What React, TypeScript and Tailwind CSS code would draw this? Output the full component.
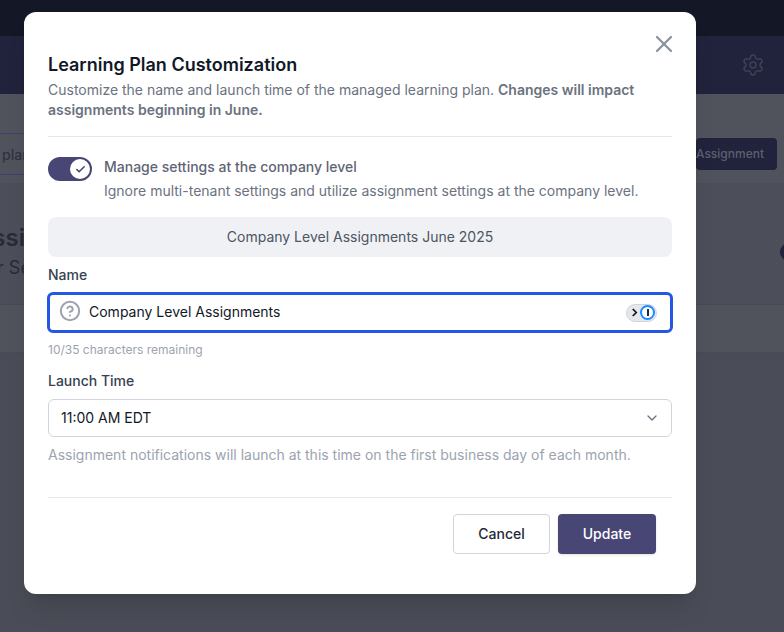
import { Check, ChevronDown, CircleHelp, Settings, X } from 'lucide-react'

const App = () => {
    return (
        <div className="relative h-[632px] w-[784px] overflow-hidden bg-[#4a4d57] font-['Inter',sans-serif]">

            {/* dimmed page behind the dialog */}
            <div className="h-9 bg-[#141826]" />
            <div className="flex h-[58px] items-center justify-end bg-[#20233b] pr-[19px]">
                <Settings className="h-6 w-6 text-[#3f4354]" strokeWidth={1.4} />
            </div>
            <div className="flex h-[89px] items-end justify-between bg-[#50535c] pb-[8px]">
                <div className="flex h-[42px] w-[24px] items-center overflow-hidden border-y border-[#3e4270] pt-[2px] text-sm font-medium text-[#2f3342]">
                    <span className="ml-[2px]">plan</span>
                </div>
                <div className="mb-[5px] mr-[7px] flex h-[32px] w-[81px] items-center justify-end rounded bg-[#20233b] pr-[13px] text-xs font-medium text-[#5d6070]">
                    Assignment
                </div>
            </div>
            <div className="flex h-[122px] justify-between overflow-hidden border-b border-[#484b54] bg-[#4c4f59] pt-[39px]">
                <div className="text-[#282b38]">
                    <div className="ml-[-25px] text-2xl font-semibold leading-8">Assig</div>
                    <div className="ml-[-3px] text-lg leading-7">r Se</div>
                </div>
                <div className="mr-[-14px] mt-[21px] h-[18px] w-[18px] rounded-full bg-[#20233b]" />
            </div>
            <div className="h-[48px] border-b border-[#484b54] bg-[#50535c]" />

            {/* dialog */}
            <div className="absolute left-[24px] top-[12px] h-[582px] w-[672px] rounded-xl bg-white px-6 pt-[42px] shadow-xl">
                <button className="absolute right-[18px] top-[18px] text-[#8a919e]">
                    <X className="h-7 w-7" strokeWidth={1.9} />
                </button>

                <h2 className="text-lg font-semibold leading-[22px] text-[#111827]">Learning Plan Customization</h2>
                <p className="mt-[4px] text-sm leading-5 text-[#6b7280]">
                    Customize the name and launch time of the managed learning plan.{' '}
                    <span className="font-semibold">Changes will impact assignments beginning in June.</span>
                </p>

                <div className="mt-[16px] border-t border-[#e5e7eb]" />

                <div className="mt-[18px] flex gap-3">
                    <div className="mt-[2px] flex h-6 w-11 items-center justify-end rounded-full bg-[#484675] pr-[2px]">
                        <div className="flex h-5 w-5 items-center justify-center rounded-full bg-white">
                            <Check className="h-[11px] w-[11px] text-[#484675]" strokeWidth={3.5} />
                        </div>
                    </div>
                    <div className="text-sm leading-6 text-[#6b7280]">
                        <div className="font-medium text-[#5f6475]">Manage settings at the company level</div>
                        <div>Ignore multi-tenant settings and utilize assignment settings at the company level.</div>
                    </div>
                </div>

                <div className="mt-[14px] flex h-10 items-center justify-center rounded-lg bg-[#f0f1f5] text-sm text-[#4b5563]">
                    Company Level Assignments June 2025
                </div>

                <label className="mt-[8px] block text-sm font-medium leading-5 text-[#374151]">Name</label>

                <div className="-mx-px mt-[7px] flex h-[41px] items-center rounded-md border-[3px] border-[#2457e6] pl-[9px] pr-[13px]">
                    <CircleHelp className="-mt-[3px] h-[22px] w-[22px] text-[#9ca3af]" strokeWidth={2.2} />
                    <span className="-mt-px ml-[8px] flex-1 text-sm text-[#111827]">Company Level Assignments</span>
                    <div className="flex h-[18px] w-[31px] items-center justify-between rounded-full border border-[#d1d5db] bg-[#e5e7eb] pl-[4px] pr-px">
                        <svg viewBox="0 0 8 10" className="h-[9px] w-[7px]" fill="none" stroke="#111827" strokeWidth="2">
                            <path d="M2 1l4 4-4 4" />
                        </svg>
                        <div className="flex h-[15px] w-[15px] items-center justify-center rounded-full border-[2.5px] border-[#1a8cff] bg-white">
                            <div className="h-[7px] w-[2px] bg-[#1f2937]" />
                        </div>
                    </div>
                </div>

                <p className="mt-[9px] text-xs leading-4 text-[#9ca3af]">10/35 characters remaining</p>

                <label className="mt-[13px] block text-sm font-medium leading-5 text-[#374151]">Launch Time</label>

                <div className="mt-[8px] flex h-[38px] items-center justify-between rounded-md border border-[#d1d5db] pl-3 pr-[11px] text-sm text-[#111827]">
                    11:00 AM EDT
                    <ChevronDown className="h-4 w-4 text-[#6b7280]" strokeWidth={2} />
                </div>

                <p className="mt-[8px] text-sm leading-5 text-[#9ca3af]">
                    Assignment notifications will launch at this time on the first business day of each month.
                </p>

                <div className="mt-[32px] border-t border-[#e5e7eb]" />

                <div className="mt-4 flex justify-end gap-2 pr-4">
                    <button className="h-10 w-[97px] rounded border border-[#d1d5db] bg-white text-sm font-medium text-[#1f2937]">
                        Cancel
                    </button>
                    <button className="h-10 w-[98px] rounded bg-[#484675] text-sm font-medium text-white shadow-sm">
                        Update
                    </button>
                </div>
            </div>
        </div>
    )
}

export default App
